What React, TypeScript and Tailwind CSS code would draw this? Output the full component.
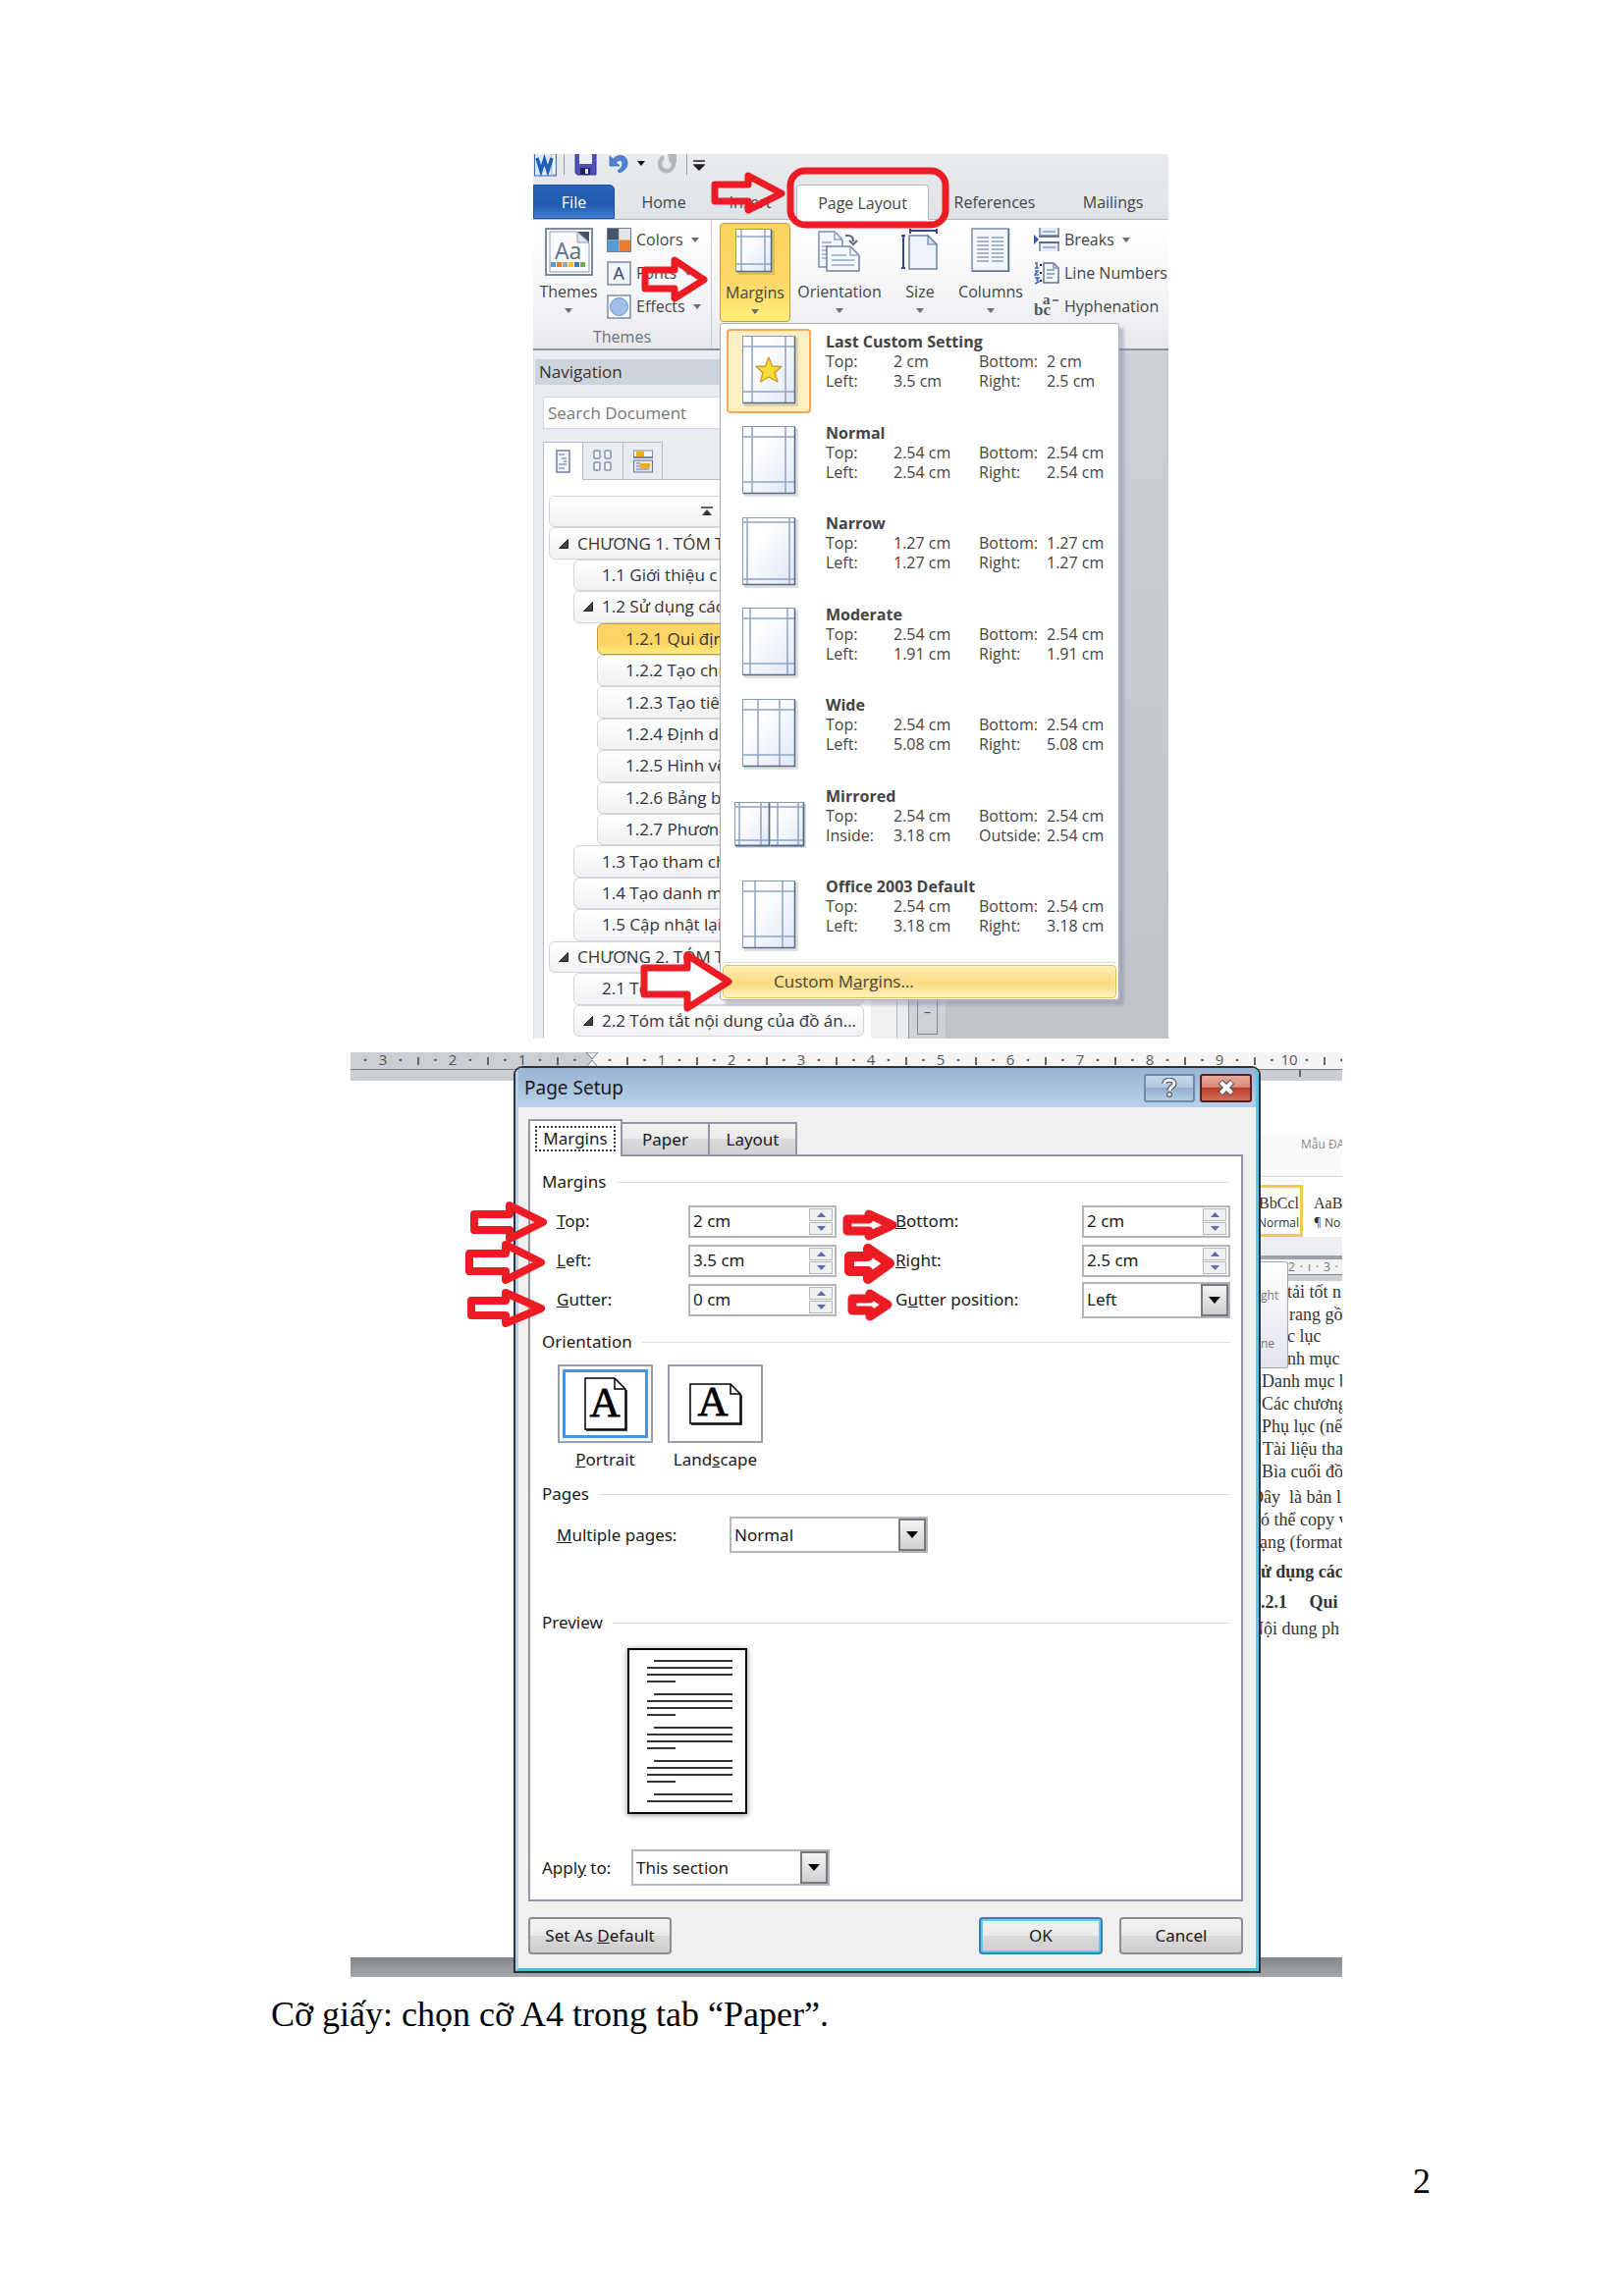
import React from "react";

const UI = "font-['Open_Sans','Noto_Sans',sans-serif]";
const DLG = "font-['Noto_Sans','Open_Sans',sans-serif]";

function Caret({ className = "" }: { className?: string }) {
  return (
    <svg className={className} width="8" height="5" viewBox="0 0 8 5" aria-hidden="true">
      <path d="M0 0H8L4 5Z" fill="#6a6d72" />
    </svg>
  );
}

/* ---------- Quick access toolbar ---------- */

function QuickAccess() {
  return (
    <div className="flex h-[31px] items-start gap-[6px] pl-px">
      <svg width="23" height="23" viewBox="0 0 23 23" aria-label="Word">
        <rect x="0.5" y="-2" width="22" height="24" fill="#dce8f7" stroke="#3c6fb5" />
        <rect x="18" y="0" width="4" height="21" fill="#fff" stroke="#6f97cd" strokeWidth="0.8" />
        <path d="M3 4L7 17L10.500 6L14 17L18 4" fill="none" stroke="#1f5fb4" strokeWidth="3.600" />
      </svg>
      <span className="ml-px h-[21px] w-px bg-[#9b9fa5]" />
      <button aria-label="Save" className="ml-1">
        <svg width="23" height="22" viewBox="0 0 23 22">
          <path d="M1 0H22V21H3L1 19Z" fill="#4c50b8" stroke="#34378d" />
          <rect x="5" y="0" width="13" height="10" fill="#eef1fa" />
          <rect x="6" y="14" width="10" height="7" fill="#20225a" />
          <rect x="11" y="15" width="3" height="5" fill="#e7e9f6" />
        </svg>
      </button>
      <button aria-label="Undo" className="ml-[6px]">
        <svg width="20" height="20" viewBox="0 0 20 20">
          <path d="M1 2V12H11L7.500 8.500C10 5.500 14 6 14 9.500C14 13 12 15 9 17L11 19C16 17 19 13.500 19 9C19 1 10 -1 4.500 5Z" fill="#4f82d6" stroke="#3566b8" strokeWidth="0.8" />
        </svg>
      </button>
      <span className="mt-[7px] ml-[3px]">
        <svg width="8" height="5" viewBox="0 0 8 5" aria-hidden="true">
          <path d="M0 0H8L4 5Z" fill="#111" />
        </svg>
      </span>
      <button aria-label="Redo" className="ml-[7px]">
        <svg width="20" height="20" viewBox="0 0 20 20">
          <path d="M6 3A7 7.500 0 1 0 15 6" fill="none" stroke="#b4b7bb" strokeWidth="4.500" />
          <path d="M10 0H19V9L16 6L12 9Z" fill="#b4b7bb" />
        </svg>
      </button>
      <span className="ml-[3px] h-[21px] w-px bg-[#9b9fa5]" />
      <button aria-label="Customize Quick Access Toolbar" className="mt-[6px]">
        <svg width="12" height="11" viewBox="0 0 12 11">
          <path d="M0 1H12M1 5H11L6 10Z" fill="#222" stroke="#222" strokeWidth="1.500" />
        </svg>
      </button>
    </div>
  );
}

function RibbonTabs() {
  return (
    <div className="flex h-[36px] border-b border-[#b6babf] text-[16px] leading-[36px] text-[#444]">
      <button className="w-[83px] rounded-tr-[5px] border border-[#1d4f9e] bg-[linear-gradient(#2a62b5,#225aae_60%,#3f7fd0)] text-white leading-[34px]">
        File
      </button>
      <button className="w-[100px]">Home</button>
      <button className="w-[76px]">Insert</button>
      <button className="ml-[9px] h-[36px] w-[135px] rounded-t-[4px] border border-b-0 border-[#b6babf] bg-white leading-[34px]">
        Page Layout
      </button>
      <button className="w-[134px]">References</button>
      <button className="w-[107px]">Mailings</button>
    </div>
  );
}

/* ---------- Ribbon icons ---------- */

function PageDefs({ id }: { id: string }) {
  return (
    <defs>
      <linearGradient id={id} x1="0" y1="0" x2="1" y2="1">
        <stop offset="0.3" stopColor="#fff" />
        <stop offset="1" stopColor="#dfe7f6" />
      </linearGradient>
    </defs>
  );
}

type GuideProps = { id: string; w: number; h: number; xs: number[]; ys: number[]; star?: boolean };

function MarginPage({ id, w, h, xs, ys, star }: GuideProps) {
  return (
    <svg width={w + 4} height={h + 4} viewBox={`0 0 ${w + 4} ${h + 4}`} aria-hidden="true">
      <PageDefs id={id} />
      <rect x="2" y="2" width={w + 1} height={h + 1} fill="#000" opacity="0.12" />
      <rect x="0.500" y="0.500" width={w - 1} height={h - 1} fill={`url(#${id})`} stroke="#8598b3" />
      {xs.map((x) => (
        <path key={`x${x}`} d={`M${x} 1V${h - 1}`} stroke="#8fa3c1" strokeWidth="1.500" />
      ))}
      {ys.map((y) => (
        <path key={`y${y}`} d={`M1 ${y}H${w - 1}`} stroke="#8fa3c1" strokeWidth="1.500" />
      ))}
      <path d={`M${w - 0.5} 1V${h - 0.5}H1`} fill="none" stroke="#566b85" strokeWidth="1.500" />
      {star && (
        <path
          d="M27 22L30.500 31L40 31.500L33 37.500L36 47L27 42L18.500 47L21 37.500L14 31.500L23.500 31Z"
          fill="#ffd83a"
          stroke="#c99a1b"
          strokeWidth="1.300"
          strokeLinejoin="round"
        />
      )}
    </svg>
  );
}

function MirroredPages() {
  return (
    <svg width="74" height="48" viewBox="0 0 74 48" aria-hidden="true">
      <PageDefs id="mirror" />
      <rect x="2" y="2" width="71" height="45" fill="#000" opacity="0.12" />
      {[0, 35].map((o) => (
        <g key={o}>
          <rect x={o + 0.5} y="0.500" width="35" height="44" fill="url(#mirror)" stroke="#8598b3" />
          <path
            d={o === 0 ? "M5 1V44M27 1V44M1 5H35M1 39H35" : "M44 1V44M65 1V44M36 5H70M36 39H70"}
            stroke="#8fa3c1"
            strokeWidth="1.500"
          />
        </g>
      ))}
      <path d="M35.500 1V44.500H1M70.500 1V44.500H37" fill="none" stroke="#566b85" strokeWidth="1.800" />
    </svg>
  );
}

function ThemesIcon() {
  const colors = ["#5b9bd5", "#ed7d31", "#a5a5a5", "#ffc000", "#4472c4", "#70ad47"];
  return (
    <svg width="49" height="49" viewBox="0 0 49 49" aria-hidden="true">
      <rect x="1" y="1" width="47" height="47" fill="#fff" stroke="#7c8ba1" strokeWidth="2" />
      <path d="M5 4H33L45 16V45H5Z" fill="#f8fafc" stroke="#8d9bb0" />
      <path d="M33 4H45V16Z" fill="#44546a" />
      <path d="M33 4V15H45Z" fill="#dfe5ee" stroke="#8d9bb0" />
      <text x="10" y="32" fontFamily="Open Sans" fontSize="23" fill="#5b6f89">Aa</text>
      {colors.map((c, i) => (
        <rect key={c} x={6 + i * 6} y="35" width="5" height="5" fill={c} />
      ))}
    </svg>
  );
}

function OrientationIcon() {
  return (
    <svg width="46" height="45" viewBox="0 0 46 45" aria-hidden="true">
      <path d="M2 4H18L26 12V40H2Z" fill="#f3f7fd" stroke="#7d90ad" strokeWidth="1.500" />
      <path d="M18 4V12H26M5 15H15M5 19H12M5 23H10M5 27H10M5 31H10" fill="none" stroke="#93a7c5" strokeWidth="1.500" />
      <path d="M10 19H34L43 28V44H10Z" fill="#f6f9fe" stroke="#6e82a0" strokeWidth="1.500" />
      <path d="M34 19V28H43M15 28H30M15 33H38M15 38H38" fill="none" stroke="#93a7c5" strokeWidth="1.500" />
      <path d="M29 8H32C36 8 37 11 37 14M33 13L37 17L41 13" fill="none" stroke="#5a6b86" strokeWidth="2.200" />
    </svg>
  );
}

function SizeIcon() {
  return (
    <svg width="38" height="44" viewBox="0 0 38 44" aria-hidden="true">
      <path d="M8 8H27L36 17V42H8Z" fill="#eef3fb" stroke="#6e82a0" strokeWidth="1.500" />
      <path d="M27 8V17H36Z" fill="#d5dfef" stroke="#6e82a0" strokeWidth="1.200" />
      <path d="M9 3H36M9 1V6M36 1V6M2 8V41M0 8H4M0 41H4" stroke="#33479b" strokeWidth="2" />
    </svg>
  );
}

function ColumnsIcon() {
  const rows = [10, 14, 18, 22, 26, 30, 34];
  return (
    <svg width="40" height="45" viewBox="0 0 40 45" aria-hidden="true">
      <rect x="1" y="1" width="37" height="43" fill="#f3f7fd" stroke="#7d90ad" strokeWidth="1.500" />
      <path d="M38.500 1V44.500H1" fill="none" stroke="#5d7089" strokeWidth="1.500" />
      {rows.map((y) => (
        <path key={y} d={`M6 ${y}H18M21 ${y}H33`} stroke="#a4b4cd" strokeWidth="2" />
      ))}
    </svg>
  );
}

function BreaksIcon() {
  return (
    <svg width="26" height="24" viewBox="0 0 26 24" aria-hidden="true">
      <path d="M6 0V8H25V0M6 24V15H25V24" fill="#e6edf8" stroke="#6c7f9d" strokeWidth="1.500" />
      <path d="M5 9H26M5 15H26" stroke="#4b5f7e" strokeWidth="1.500" />
      <path d="M9 4H22M9 20H22" stroke="#a4b4cd" strokeWidth="2" />
      <path d="M0 7L5 12L0 17Z" fill="#2f5cb8" />
    </svg>
  );
}

function LineNumbersIcon() {
  return (
    <svg width="26" height="24" viewBox="0 0 26 24" aria-hidden="true">
      <path d="M10 2H20L25 7V22H10Z" fill="#f1f5fc" stroke="#62748f" strokeWidth="1.500" />
      <path d="M20 2V7H25M13 9H21M13 13H21M13 17H19" fill="none" stroke="#8093b1" strokeWidth="1.500" />
      <path d="M1 2H3V7M1 7H5M1 10H4L1 14H5M1 17H5L3 19L5 21L1 23" fill="none" stroke="#3d63bb" strokeWidth="1.500" />
      <path d="M7 3V5M7 11V13M7 19V21" stroke="#222" strokeWidth="2" />
    </svg>
  );
}

function HyphenationIcon() {
  return (
    <svg width="26" height="24" viewBox="0 0 26 24" aria-hidden="true">
      <text x="0" y="21" fontFamily="Liberation Serif" fontWeight="bold" fontSize="17" fill="#555">bc</text>
      <text x="9" y="10" fontFamily="Liberation Serif" fontWeight="bold" fontSize="15" fill="#555">a</text>
      <path d="M19 6H25" stroke="#555" strokeWidth="1.500" />
    </svg>
  );
}

function SmallCommand({ icon, label, caret }: { icon: React.ReactNode; label: string; caret?: boolean }) {
  return (
    <button className="flex h-[34px] items-center gap-[5px] whitespace-nowrap">
      {icon}
      <span>{label}</span>
      {caret && <Caret className="ml-[3px]" />}
    </button>
  );
}

function LargeCommand({ icon, label, className }: { icon: React.ReactNode; label: string; className: string }) {
  return (
    <button className={`flex h-[101px] flex-col items-center pt-[5px] ${className}`}>
      <span className="flex h-[53px] items-start">{icon}</span>
      <span className="leading-[24px]">{label}</span>
      <Caret className="mt-[5px]" />
    </button>
  );
}

function Ribbon() {
  return (
    <div className="flex h-[133px] border-b-2 border-[#8f939a] bg-[linear-gradient(#ffffff,#f4f5f7_60%,#e6e8ec)] text-[16px] text-[#444]">
      <section className="w-[182px] border-r border-[#c8cbd0] pt-[3px]">
        <div className="flex h-[102px] pl-[6px]">
          <LargeCommand icon={<ThemesIcon />} label="Themes" className="w-[60px]" />
          <div className="ml-[9px]">
            <SmallCommand
              caret
              label="Colors"
              icon={
                <svg width="25" height="25" viewBox="0 0 25 25" aria-hidden="true">
                  <path d="M0 0H12.500V12.500H0Z" fill="#44546a" />
                  <path d="M12.500 0H25V12.500H12.500Z" fill="#e7e6e6" />
                  <path d="M0 12.500H12.500V25H0Z" fill="#5b9bd5" />
                  <path d="M12.500 12.500H25V25H12.500Z" fill="#ed7d31" />
                  <rect x="0.500" y="0.500" width="24" height="24" fill="none" stroke="#6f7f96" />
                </svg>
              }
            />
            <SmallCommand
              caret
              label="Fonts"
              icon={
                <svg width="25" height="25" viewBox="0 0 25 25" aria-hidden="true">
                  <rect x="1" y="1" width="23" height="23" fill="#f0f4fb" stroke="#7c8ba1" strokeWidth="1.500" />
                  <text x="6.500" y="19" fontFamily="Open Sans" fontSize="18" fill="#3a4658">A</text>
                </svg>
              }
            />
            <SmallCommand
              caret
              label="Effects"
              icon={
                <svg width="25" height="25" viewBox="0 0 25 25" aria-hidden="true">
                  <rect x="1" y="1" width="23" height="23" fill="#f8fafd" stroke="#7c8ba1" strokeWidth="1.500" />
                  <circle cx="12.500" cy="12.500" r="9" fill="#9fc0ea" stroke="#5b9bd5" />
                </svg>
              }
            />
          </div>
        </div>
        <div className="text-center leading-[28px] text-[#6d7279]">Themes</div>
      </section>
      <section className="flex pt-[3px] pl-[8px]">
        <LargeCommand
          icon={<MarginPage id="rb" w={37} h={44} xs={[6, 30]} ys={[8, 36]} />}
          label="Margins"
          className="w-[72px] rounded-[4px] border border-[#c49a3c] bg-[linear-gradient(#fbd35f,#fdd768_60%,#ffef7c)]"
        />
        <LargeCommand icon={<OrientationIcon />} label="Orientation" className="ml-[2px] w-[96px]" />
        <LargeCommand icon={<SizeIcon />} label="Size" className="ml-1 w-[60px]" />
        <LargeCommand icon={<ColumnsIcon />} label="Columns" className="ml-1 w-[76px]" />
        <div className="ml-[6px]">
          <SmallCommand caret icon={<BreaksIcon />} label="Breaks" />
          <SmallCommand icon={<LineNumbersIcon />} label="Line Numbers" />
          <SmallCommand icon={<HyphenationIcon />} label="Hyphenation" />
        </div>
      </section>
    </div>
  );
}

/* ---------- Navigation pane ---------- */

type Node = { text: string; level: 0 | 1 | 2; open?: boolean; active?: boolean };

const OUTLINE: Node[] = [
  { text: "CHƯƠNG 1. TÓM T", level: 0, open: true },
  { text: "1.1 Giới thiệu c", level: 1 },
  { text: "1.2 Sử dụng các", level: 1, open: true },
  { text: "1.2.1 Qui địn", level: 2, active: true },
  { text: "1.2.2 Tạo chu", level: 2 },
  { text: "1.2.3 Tạo tiê", level: 2 },
  { text: "1.2.4 Định d", level: 2 },
  { text: "1.2.5 Hình vẽ", level: 2 },
  { text: "1.2.6 Bảng b", level: 2 },
  { text: "1.2.7 Phươn", level: 2 },
  { text: "1.3 Tạo tham ch", level: 1 },
  { text: "1.4 Tạo danh m", level: 1 },
  { text: "1.5 Cập nhật lại", level: 1 },
  { text: "CHƯƠNG 2. TÓM T", level: 0, open: true },
  { text: "2.1 Tó", level: 1 },
  { text: "2.2 Tóm tắt nội dung của đồ án...", level: 1, open: true },
];

const INDENT = ["ml-0", "ml-[25px]", "ml-[49px]"];

function OutlineItem({ node }: { node: Node }) {
  const tone = node.active
    ? "border-[#c49a3c] bg-[linear-gradient(#fdd768,#fcd364_60%,#ffec7a)]"
    : "border-[#d3d5d8] bg-[linear-gradient(#ffffff,#f1f2f4)]";
  return (
    <button
      className={`flex flex-1 items-center rounded-[6px] border text-left whitespace-nowrap ${tone} ${INDENT[node.level]}`}
    >
      <span className="flex w-[28px] shrink-0 justify-center">
        {node.open && (
          <svg width="10" height="10" viewBox="0 0 10 10" aria-hidden="true">
            <path d="M9.500 0.500V9.500H0.500Z" fill="#444" stroke="#222" />
          </svg>
        )}
      </span>
      {node.text}
    </button>
  );
}

function NavigationPane() {
  return (
    <div className="flex w-[382px] flex-col border-l border-[#dfe3e8] bg-[#e9edf2] text-[17px] text-[#333]">
      <h2 className="mt-[9px] ml-px h-[26px] bg-[#ced4db] pl-1 leading-[26px]">Navigation</h2>
      <input
        aria-label="Search Document"
        placeholder="Search Document"
        className="mt-[12px] ml-[9px] h-[33px] border border-[#d3d7dc] bg-white pl-1 placeholder:text-[#777]"
      />
      <div className="mt-[13px] ml-[9px] flex h-[39px]">
        <button aria-label="Headings" className="flex w-[41px] items-center justify-center border border-b-0 border-[#b8bdc4] bg-white">
          <svg width="15" height="24" viewBox="0 0 15 24">
            <rect x="1" y="1" width="13" height="22" fill="#f2f6fc" stroke="#6f819d" strokeWidth="1.500" />
            <path d="M3 5H9M6 9H11M8 12H11M3 15H11M3 19H9" stroke="#8da0bd" strokeWidth="1.500" />
          </svg>
        </button>
        <button aria-label="Pages" className="flex w-[41px] items-center justify-center border-y border-r border-[#b8bdc4]">
          <svg width="20" height="23" viewBox="0 0 20 23" fill="#f2f6fc" stroke="#8292ab" strokeWidth="1.500">
            <rect x="1" y="1" width="6" height="8" rx="1" />
            <rect x="12" y="1" width="6" height="8" rx="1" />
            <rect x="1" y="13" width="6" height="8" rx="1" />
            <rect x="12" y="13" width="6" height="8" rx="1" />
          </svg>
        </button>
        <button aria-label="Results" className="flex w-[40px] items-center justify-center border-y border-r border-[#b8bdc4]">
          <svg width="20" height="24" viewBox="0 0 20 24">
            <rect x="0.500" y="1" width="19" height="7" fill="#f2f6fc" stroke="#7d8eab" />
            <rect x="3" y="2" width="8" height="5" fill="#f0ad1c" />
            <path d="M0 8H20" stroke="#62748f" strokeWidth="1.500" />
            <rect x="0.500" y="11" width="19" height="12" fill="#dde6f4" stroke="#62748f" />
            <path d="M3 14H7M3 17H7M3 20H16" stroke="#8da0bd" strokeWidth="1.500" />
            <rect x="7" y="14" width="10" height="5" fill="#f0ad1c" />
          </svg>
        </button>
        <span className="flex-1 border-b border-[#b8bdc4]" />
      </div>
      <div className="mr-[11px] ml-[9px] flex flex-1 border-x border-[#b8bdc4] bg-white">
        <div className="mt-[16px] flex w-[326px] flex-col pl-[5px]">
          <div className="flex h-[551px] flex-col">
            <button
              aria-label="Jump to the beginning"
              className="flex flex-1 items-center justify-center rounded-[6px] border border-[#d3d5d8] bg-[linear-gradient(#ffffff,#f1f2f4)]"
            >
              <svg width="12" height="10" viewBox="0 0 12 10">
                <path d="M0 1H12" stroke="#333" strokeWidth="1.500" />
                <path d="M6 3L11 9H1Z" fill="#333" />
              </svg>
            </button>
            {OUTLINE.map((n) => (
              <OutlineItem key={n.text} node={n} />
            ))}
          </div>
        </div>
        <div className="ml-auto w-[26px] bg-[#f0f0f1]" />
      </div>
    </div>
  );
}

/* ---------- Margins drop-down ---------- */

type Preset = { name: string; icon: React.ReactNode; rows: [string, string, string, string][]; current?: boolean };

const PRESETS: Preset[] = [
  {
    name: "Last Custom Setting",
    current: true,
    icon: <MarginPage id="p0" w={54} h={69} xs={[10, 44]} ys={[11, 57]} star />,
    rows: [["Top:", "2 cm", "Bottom:", "2 cm"], ["Left:", "3.5 cm", "Right:", "2.5 cm"]],
  },
  {
    name: "Normal",
    icon: <MarginPage id="p1" w={54} h={69} xs={[10, 44]} ys={[11, 57]} />,
    rows: [["Top:", "2.54 cm", "Bottom:", "2.54 cm"], ["Left:", "2.54 cm", "Right:", "2.54 cm"]],
  },
  {
    name: "Narrow",
    icon: <MarginPage id="p2" w={54} h={69} xs={[5, 48]} ys={[5, 63]} />,
    rows: [["Top:", "1.27 cm", "Bottom:", "1.27 cm"], ["Left:", "1.27 cm", "Right:", "1.27 cm"]],
  },
  {
    name: "Moderate",
    icon: <MarginPage id="p3" w={54} h={69} xs={[8, 46]} ys={[11, 57]} />,
    rows: [["Top:", "2.54 cm", "Bottom:", "2.54 cm"], ["Left:", "1.91 cm", "Right:", "1.91 cm"]],
  },
  {
    name: "Wide",
    icon: <MarginPage id="p4" w={54} h={69} xs={[16, 38]} ys={[11, 57]} />,
    rows: [["Top:", "2.54 cm", "Bottom:", "2.54 cm"], ["Left:", "5.08 cm", "Right:", "5.08 cm"]],
  },
  {
    name: "Mirrored",
    icon: <MirroredPages />,
    rows: [["Top:", "2.54 cm", "Bottom:", "2.54 cm"], ["Inside:", "3.18 cm", "Outside:", "2.54 cm"]],
  },
  {
    name: "Office 2003 Default",
    icon: <MarginPage id="p5" w={54} h={69} xs={[13, 41]} ys={[11, 57]} />,
    rows: [["Top:", "2.54 cm", "Bottom:", "2.54 cm"], ["Left:", "3.18 cm", "Right:", "3.18 cm"]],
  },
];

function MarginsMenu() {
  return (
    <div
      role="menu"
      className="absolute top-[172px] left-[190px] w-[407px] rounded-[3px] border border-[#a9adb5] bg-white pb-px text-[16px] leading-[20px] text-[#444] shadow-[5px_5px_3px_rgba(130,130,160,0.4)]"
    >
      <div className="flex h-[650px] flex-col pt-[2px]">
        {PRESETS.map((p) => (
          <button key={p.name} role="menuitem" className="flex flex-1 items-start gap-[15px] pt-[3px] pl-[6px] text-left">
            <span
              className={`flex h-[86px] w-[86px] items-center justify-center rounded-[4px] border-2 pl-[3px] ${
                p.current ? "border-[#f5a85a] bg-[#fcefc4]" : "border-transparent"
              }`}
            >
              {p.icon}
            </span>
            <span className="pt-[3px]">
              <span className="block font-bold">{p.name}</span>
              {p.rows.map((r) => (
                <span key={r[0]} className="grid grid-cols-[69px_87px_69px_auto]">
                  {r.map((c, i) => (
                    <span key={i} className="whitespace-nowrap">{c}</span>
                  ))}
                </span>
              ))}
            </span>
          </button>
        ))}
      </div>
      <div className="mx-[2px] border-t border-[#d8dade] pt-[2px]">
        <button
          role="menuitem"
          className="block h-[34px] w-full rounded-[4px] border border-[#e8bf48] bg-[linear-gradient(#fdedb5,#fbdd83_50%,#fbdd83_60%,#fff3c4)] pl-[51px] text-left text-[17px] shadow-[inset_0_0_0_1px_#fff1b8]"
        >
          Custom M<u>a</u>rgins...
        </button>
      </div>
    </div>
  );
}

function Arrow({ points, fill = "none", width = 7 }: { points: string; fill?: string; width?: number }) {
  return <polygon points={points} fill={fill} stroke="#ed1c24" strokeWidth={width} strokeLinejoin="round" />;
}

function WordWindow() {
  return (
    <figure className={`relative mx-auto flex h-[901px] w-full max-w-[647px] flex-col overflow-hidden bg-[linear-gradient(#e9ebee,#dfe3e7_67px)] leading-[24px] ${UI}`}>
      <QuickAccess />
      <RibbonTabs />
      <Ribbon />
      <div className="flex flex-1 bg-[linear-gradient(#cdd0d5,#c0c3c8)]">
        <NavigationPane />
        <div className="flex w-[38px] items-end justify-center border-l border-[#8f939a] bg-[#cfd2d7] pb-1">
          <span className="flex h-[60px] w-[21px] items-center justify-center border border-[#85888e] pt-[14px] text-[14px] text-[#555]">–</span>
        </div>
      </div>
      <MarginsMenu />
      <svg className="pointer-events-none absolute inset-0" width="647" height="901" viewBox="0 0 647 901" aria-hidden="true">
        <rect x="262" y="17" width="158" height="55" rx="15" fill="none" stroke="#ed1c24" strokeWidth="7" />
        <Arrow points="185,31 219,31 219,22 253,40 219,57 219,48 185,48" />
        <Arrow points="114,118 144,118 144,108 174,128 144,147 144,137 114,137" />
        <Arrow points="113,829 157,829 157,816 199,843 157,870 157,856 113,856" fill="#fff" />
      </svg>
    </figure>
  );
}

/* ---------- Document behind the dialog ---------- */

const RULER = ["3", "2", "1", "", "1", "2", "3", "4", "5", "6", "7", "8", "9", "10"];

function Ruler() {
  return (
    <div className="flex h-[18px] overflow-hidden border-b border-[#7c8086] bg-[linear-gradient(to_right,#cbced3_246px,#f5f5f5_246px)] text-[15px] leading-[15px] text-[#555]">
      <span className="w-[24px] shrink-0 pl-[13px] font-bold">·</span>
      {RULER.map((n, i) => (
        <span key={i} className="flex w-[71px] shrink-0 text-center">
          <span className="flex w-[18px] justify-center">
            {n || (
              <svg width="14" height="16" viewBox="0 0 14 16" aria-hidden="true">
                <path d="M1 0H13L7 7ZM7 8L13 15H1Z" fill="#eee" stroke="#777" />
              </svg>
            )}
          </span>
          <span className="w-[18px] font-bold">·</span>
          <span className="flex w-[18px] items-center justify-center">
            <span className="h-[8px] w-[2px] bg-[#666]" />
          </span>
          <span className="flex-1 font-bold">·</span>
        </span>
      ))}
    </div>
  );
}

const BODY_LINES: [string, string][] = [
  ["tải tốt n", "ml-[27px] h-[23px]"],
  ["rang gồ", "ml-[29px] h-[22px]"],
  ["c lục", "ml-[27px] h-[23px]"],
  ["nh mục l", "ml-[27px] h-[23px]"],
  ["Danh mục b", "ml-[1px] h-[23px]"],
  ["Các chương", "ml-[1px] h-[23px]"],
  ["Phụ lục (nế", "ml-[1px] h-[23px]"],
  ["Tài liệu tha", "ml-[2px] h-[23px]"],
  ["Bìa cuối đồ", "ml-[1px] h-[26px]"],
  ["Đây  là bản l", "-ml-[10px] h-[23px]"],
  ["ó thể copy v", "ml-0 h-[23px]"],
  ["ạng (format", "-ml-[1px] h-[30px]"],
  ["ử dụng các", "ml-0 h-[31px] font-bold"],
  [".2.1     Qui", "ml-0 h-[27px] font-bold"],
  ["Nội dung ph", "-ml-[10px] h-[23px]"],
];

function DocumentStrip() {
  return (
    <div className="relative ml-auto w-[83px] overflow-hidden whitespace-nowrap text-[#333]">
      <div className="mt-[55px] h-[43px] border-b border-[#d5d8dc] bg-[#fafafa] pl-[41px] text-[12px] leading-[20px] text-[#888]">
        Mẫu ĐA
      </div>
      <div className="mt-[8px] flex h-[53px]">
        <div className="w-[43px] shrink-0 border-[3px] border-l-0 border-[#f0cb50] pt-[6px] font-['Liberation_Serif',serif] text-[16px] leading-[20px]">
          <div className="-ml-[9px]">aBbCcl</div>
          <div className={`-ml-[3px] ${UI} text-[12px] leading-[20px]`}>Normal</div>
        </div>
        <div className="pt-[9px] pl-[11px] font-['Liberation_Serif',serif] text-[16px] leading-[20px]">
          <div>AaBl</div>
          <div className={`${UI} text-[12px] leading-[20px]`}>¶ No S</div>
        </div>
      </div>
      <div className="h-[23px] border-b-4 border-[#9ea2a8] bg-[#eceef1]" />
      <div className="flex h-[16px] justify-between border-b border-[#85898f] bg-[#f1f2f3] pr-[4px] pl-[28px] text-[12px] leading-[16px] text-[#777]">
        <span>2</span>
        <span>·</span>
        <span>ı</span>
        <span>·</span>
        <span>3</span>
        <span>·</span>
      </div>
      <div className="h-[6px] bg-[#cdd0d4]" />
      <div className="font-['Liberation_Serif',serif] text-[18px] leading-[23px] whitespace-pre">
        {BODY_LINES.map(([t, c]) => (
          <div key={t} className={c}>{t}</div>
        ))}
      </div>
      <div className={`absolute top-[184px] left-0 h-[109px] w-[28px] rounded-r-[3px] border border-l-0 border-[#a5a8b0] bg-[linear-gradient(#ffffff,#e2e3ee)] pt-[24px] text-[12px] leading-[20px] text-[#777] ${UI}`}>
        <div>ght</div>
        <div className="mt-[29px]">ne</div>
      </div>
    </div>
  );
}

/* ---------- Page Setup dialog ---------- */

function SectionTitle({ children, className }: { children: React.ReactNode; className: string }) {
  return (
    <h3 className={`flex h-[24px] items-center gap-[10px] ${className}`}>
      {children}
      <span className="h-px flex-1 bg-[#d5dfe5]" />
    </h3>
  );
}

function SpinButton({ down }: { down?: boolean }) {
  return (
    <button aria-label={down ? "Decrease" : "Increase"} className="flex h-[13px] w-[24px] items-center justify-center border border-[#b5b8bd] bg-[#f0f0f0]">
      <svg width="9" height="5" viewBox="0 0 9 5">
        <path d={down ? "M0 0H9L4.500 5Z" : "M0 5H9L4.500 0Z"} fill="#5a6fb5" />
      </svg>
    </button>
  );
}

function Spin({ id, label, value, labelWidth }: { id: string; label: React.ReactNode; value: string; labelWidth: string }) {
  return (
    <div className="flex h-[40px] items-center">
      <label htmlFor={id} className={labelWidth}>{label}</label>
      <div className="flex h-[33px] w-[151px] items-center border-2 border-[#b3b6bb] bg-white pr-[2px]">
        <input id={id} defaultValue={value} className="w-full min-w-0 pl-[3px] outline-none" />
        <span className="flex flex-col gap-px">
          <SpinButton />
          <SpinButton down />
        </span>
      </div>
    </div>
  );
}

function Dropdown({ id, value, className }: { id: string; value: string; className: string }) {
  return (
    <div className={`relative h-[37px] border-2 border-[#b3b6bb] bg-white ${className}`}>
      <select id={id} defaultValue={value} className="block h-full w-full appearance-none pl-[3px] leading-[24px] outline-none">
        <option>{value}</option>
      </select>
      <span className="pointer-events-none absolute inset-y-0 right-0 flex w-[28px] items-center justify-center border-2 border-[#77797d] bg-[linear-gradient(#f4f4f4,#cfcfcf)]">
        <svg width="12" height="7" viewBox="0 0 12 7" aria-hidden="true">
          <path d="M0 0H12L6 7Z" fill="#000" />
        </svg>
      </span>
    </div>
  );
}

function OrientationChoice({ portrait, label }: { portrait?: boolean; label: React.ReactNode }) {
  return (
    <label className="relative flex w-[97px] flex-col items-center">
      <input type="radio" name="orientation" defaultChecked={portrait} className="sr-only" />
      <span className="flex h-[80px] w-full border-2 border-[#9a9ea6] p-[3px]">
        <span className={`flex flex-1 items-center justify-center border-[3px] ${portrait ? "border-[#3b99fc]" : "border-transparent"}`}>
          {portrait ? (
            <svg width="45" height="55" viewBox="0 0 45 55" aria-hidden="true">
              <path d="M2 1H32L43 12V53H2Z" fill="#fff" stroke="#000" strokeWidth="1.500" />
              <path d="M32 1V12H43M44 13V54H3" fill="none" stroke="#000" strokeWidth="1.500" />
              <text x="22" y="40" textAnchor="middle" fontFamily="Liberation Serif" fontSize="43" stroke="#000" strokeWidth="0.8">A</text>
            </svg>
          ) : (
            <svg width="55" height="43" viewBox="0 0 55 43" aria-hidden="true">
              <path d="M2 1H43L53 11V41H2Z" fill="#fff" stroke="#000" strokeWidth="1.500" />
              <path d="M43 1V11H53M54 12V42H3" fill="none" stroke="#000" strokeWidth="1.500" />
              <text x="25" y="33" textAnchor="middle" fontFamily="Liberation Serif" fontSize="43" stroke="#000" strokeWidth="0.8">A</text>
            </svg>
          )}
        </span>
      </span>
      <span className="mt-[5px] leading-[24px]">{label}</span>
    </label>
  );
}

function PreviewPage() {
  const blocks = [0, 1, 2, 3, 4];
  return (
    <svg className="mt-[14px] ml-[87px] shadow-[0_1px_6px_rgba(0,0,0,0.45)]" width="122" height="169" viewBox="0 0 122 169" aria-hidden="true">
      <rect x="1" y="1" width="120" height="167" fill="#fff" stroke="#000" strokeWidth="2" />
      {blocks.map((b) => {
        const y = 13 + b * 34;
        return (
          <path
            key={b}
            d={`M27 ${y}H107M20 ${y + 7}H107${b < 4 ? `M20 ${y + 14}H107M20 ${y + 21}H49` : ""}`}
            stroke="#333"
            strokeWidth="2"
          />
        );
      })}
    </svg>
  );
}

const BTN = "h-[38px] rounded-[4px] border-2 bg-[linear-gradient(#f3f3f3,#e9e9e9_50%,#dadada_50%,#cecece)]";

function PageSetupDialog() {
  return (
    <div
      role="dialog"
      aria-label="Page Setup"
      className={`absolute top-[14px] left-[166px] w-[761px] overflow-hidden rounded-t-[9px] border-2 border-[#2b3238] text-[17px] leading-[24px] text-[#1a1a1a] ${DLG}`}
    >
      <div className="border-r-[3px] border-b-[3px] border-l-[3px] border-r-[#58c6ea] border-b-[#3cc4de] border-l-[#b9d1ea] bg-[#f0f0f0]">
        <div className="flex h-[40px] items-center bg-[linear-gradient(#98b4d2,#b9d1ea)] pr-[4px] pl-[6px]">
          <span className="flex-1 text-[19px]">Page Setup</span>
          <button aria-label="Help" className="flex h-[29px] w-[52px] items-center justify-center rounded-[3px] border-2 border-[#6f89a8] bg-[linear-gradient(#c5d7ea,#b4cae2_45%,#94b0ce_50%,#b4cde6)]">
            <svg width="16" height="20" viewBox="0 0 16 20">
              <path d="M3 6C3 1 13 1 13 6C13 9 8 9 8 13" fill="none" stroke="#555a66" strokeWidth="5.500" />
              <circle cx="8" cy="17" r="3" fill="#555a66" />
              <path d="M3 6C3 1 13 1 13 6C13 9 8 9 8 13" fill="none" stroke="#fff" strokeWidth="3" />
              <circle cx="8" cy="17" r="1.800" fill="#fff" />
            </svg>
          </button>
          <button aria-label="Close" className="ml-[5px] flex h-[29px] w-[53px] items-center justify-center rounded-[3px] border-2 border-[#5b1c22] bg-[linear-gradient(#e9a99b,#d98a79_45%,#b8402a_50%,#d3705c)]">
            <svg width="20" height="16" viewBox="0 0 20 16">
              <path d="M4 2L16 14M16 2L4 14" stroke="#5a5560" strokeWidth="6.500" />
              <path d="M4.500 2.500L15.500 13.500M15.500 2.500L4.500 13.500" stroke="#fff" strokeWidth="4" />
            </svg>
          </button>
        </div>
        <div className="pt-[12px] pr-[13px] pb-[14px] pl-[10px]">
          <div role="tablist" className="flex h-[36px] items-end">
            <button role="tab" aria-selected="true" className="relative -mb-[2px] h-[38px] w-[96px] border-2 border-b-0 border-[#9497a3] bg-white p-[5px]">
              <span className="block border-2 border-dotted border-[#333] leading-[22px]">Margins</span>
            </button>
            <button role="tab" className="h-[33px] w-[89px] border-2 border-b-0 border-l-0 border-[#9497a3] bg-[linear-gradient(#f2f2f2,#ebebeb_50%,#dcdcdc_50%,#d0d0d0)] leading-[30px]">
              Paper
            </button>
            <button role="tab" className="h-[33px] w-[89px] border-2 border-b-0 border-l-0 border-[#9497a3] bg-[linear-gradient(#f2f2f2,#ebebeb_50%,#dcdcdc_50%,#d0d0d0)] leading-[30px]">
              Layout
            </button>
          </div>
          <div className="border-2 border-[#9497a3] bg-white pt-[14px] pr-[11px] pb-[14px] pl-[12px]">
            <SectionTitle className="">Margins</SectionTitle>
            <div className="mt-[8px] flex justify-between pl-[15px]">
              <div>
                <Spin id="top" label={<><u>T</u>op:</>} value="2 cm" labelWidth="w-[134px]" />
                <Spin id="left" label={<><u>L</u>eft:</>} value="3.5 cm" labelWidth="w-[134px]" />
                <Spin id="gutter" label={<><u>G</u>utter:</>} value="0 cm" labelWidth="w-[134px]" />
              </div>
              <div>
                <Spin id="bottom" label={<><u>B</u>ottom:</>} value="2 cm" labelWidth="w-[190px]" />
                <Spin id="right" label={<><u>R</u>ight:</>} value="2.5 cm" labelWidth="w-[190px]" />
                <div className="flex h-[40px] items-center">
                  <label htmlFor="gutterpos" className="w-[190px]">G<u>u</u>tter position:</label>
                  <Dropdown id="gutterpos" value="Left" className="w-[151px]" />
                </div>
              </div>
            </div>
            <SectionTitle className="mt-[11px]">Orientation</SectionTitle>
            <div className="mt-[11px] flex gap-[15px] pl-[16px]">
              <OrientationChoice portrait label={<><u>P</u>ortrait</>} />
              <OrientationChoice label={<>Land<u>s</u>cape</>} />
            </div>
            <SectionTitle className="mt-[11px]">Pages</SectionTitle>
            <div className="mt-[11px] flex items-center pl-[15px]">
              <label htmlFor="multi" className="w-[176px]"><u>M</u>ultiple pages:</label>
              <Dropdown id="multi" value="Normal" className="w-[202px]" />
            </div>
            <SectionTitle className="mt-[59px]">Preview</SectionTitle>
            <PreviewPage />
            <div className="mt-[36px] flex items-center">
              <label htmlFor="apply" className="w-[91px]">Appl<u>y</u> to:</label>
              <Dropdown id="apply" value="This section" className="w-[202px]" />
            </div>
          </div>
          <div className="mt-[16px] flex">
            <button className={`${BTN} w-[146px] border-[#8c8e91]`}>Set As <u>D</u>efault</button>
            <button className={`${BTN} ml-auto w-[126px] border-[#3c7fb1] shadow-[inset_0_0_0_2px_#5ccdf2]`}>OK</button>
            <button className={`${BTN} ml-[17px] w-[126px] border-[#8c8e91]`}>Cancel</button>
          </div>
        </div>
      </div>
    </div>
  );
}

function PageSetupFigure() {
  return (
    <div className="mt-[14px] pr-[9px]">
      <figure className={`relative mx-auto h-[942px] w-full max-w-[1010px] overflow-hidden bg-white ${UI}`}>
        <Ruler />
        <div className="flex h-[11px] justify-end bg-[#cbced3] pr-[42px]">
          <span className="h-[7px] w-[2px] bg-[#666]" />
        </div>
        <div className="flex h-[893px] overflow-hidden">
          <DocumentStrip />
        </div>
        <div className="h-[20px] bg-[linear-gradient(#83878b,#a5a9ac)]" />
        <PageSetupDialog />
        <svg className="pointer-events-none absolute inset-0" width="1010" height="942" viewBox="0 0 1010 942" aria-hidden="true">
          <Arrow points="126,165 162,165 162,156 196,173 162,190 162,181 126,181" width={8} />
          <Arrow points="121,205 158,205 158,196 194,214 158,232 158,223 121,223" width={8} />
          <Arrow points="123,253 158,253 158,245 194,261 158,276 158,268 123,268" width={8} />
          <Arrow points="506,170 528,170 528,165 552,176 528,187 528,182 506,182" width={9} fill="#fff" />
          <Arrow points="508,208 527,208 527,200 549,215 527,231 527,223 508,223" width={10} fill="#fff" />
          <Arrow points="511,251 529,251 529,246 547,257 529,269 529,263 511,263" width={9} fill="#fff" />
        </svg>
      </figure>
    </div>
  );
}

export default function App() {
  return (
    <main className="min-h-screen bg-white pt-[157px] pr-[197px] pl-[276px] font-['Liberation_Serif',serif] text-[36px] leading-[42px] text-black">
      <WordWindow />
      <PageSetupFigure />
      <p className="mt-[17px]">Cỡ giấy: chọn cỡ A4 trong tab “Paper”.</p>
      <footer className="mt-[128px] text-right">2</footer>
    </main>
  );
}
